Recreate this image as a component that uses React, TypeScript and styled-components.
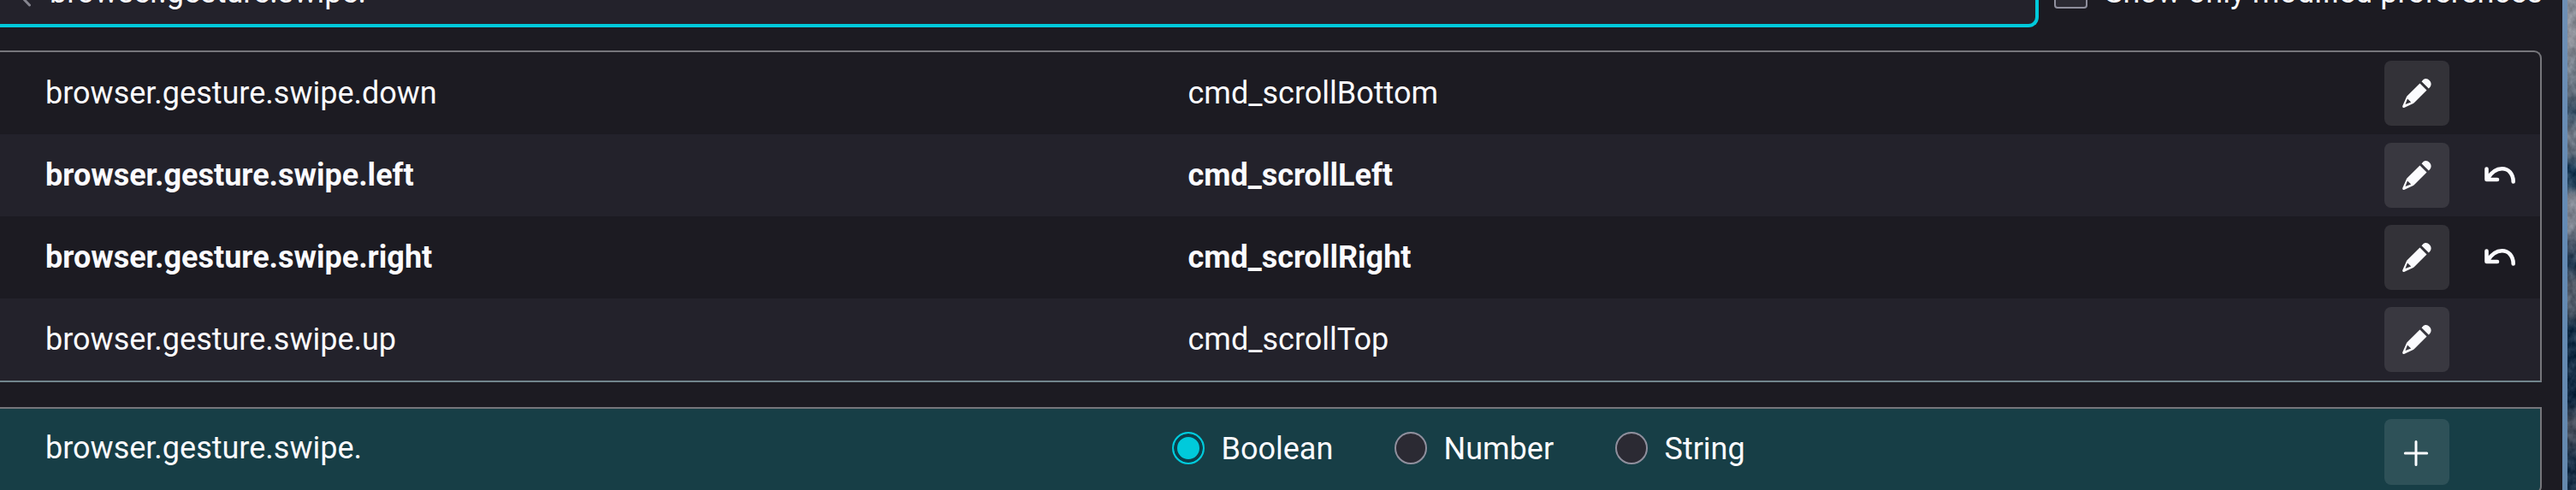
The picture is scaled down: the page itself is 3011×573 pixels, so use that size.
import React from "react";
import styled, { createGlobalStyle } from "styled-components";

const GlobalStyle = createGlobalStyle`
  * { box-sizing: border-box; }
  html, body { margin: 0; background: #1c1b22; overflow: hidden; }
  body { font-family: Roboto, sans-serif; font-size: 36px; line-height: 42px; color: #fbfbfe; }
`;

const Screen = styled.div`
  display: flex;
  width: 3011px;
  height: 573px;
  overflow: hidden;
`;

const Page = styled.main`
  width: 2995px;
  height: 573px;
  overflow: hidden;
  background: #1c1b22;
`;

const WindowEdge = styled.div`
  width: 6px;
  background: linear-gradient(#6d8fb5, #638ab4 50%, #6589ae);
`;

const Desktop = styled.svg`
  display: block;
  width: 10px;
  height: 573px;
`;

const SearchBar = styled.header`
  display: flex;
  align-items: flex-end;
  height: 32px;
`;

const SearchField = styled.div`
  display: flex;
  align-items: flex-end;
  width: 2383px;
  height: 32px;
  padding: 0 0 14px 11px;
  background: #23222b;
  border: solid #00cadb;
  border-width: 0 4px 4px 0;
  border-bottom-right-radius: 12px;
`;

const SearchIcon = styled.svg`
  flex: none;
  width: 26px;
  height: 26px;
  margin: 0 21px 6px 0;
`;

const SearchText = styled.span`
  height: 42px;
  margin-bottom: 2px;
`;

const Filter = styled.label`
  display: flex;
  align-items: flex-end;
  margin-left: 18px;
`;

const Checkbox = styled.span`
  width: 39px;
  height: 39px;
  margin: 0 20px 22px 0;
  background: #2b2a33;
  border: 2px solid #8f8f9d;
  border-radius: 4px;
`;

const FilterText = styled.span`
  white-space: nowrap;
  margin-bottom: 20px;
`;

const Prefs = styled.section`
  width: 2971px;
  height: 388px;
  margin-top: 27px;
  border: solid #76767b;
  border-width: 2px 2px 2px 0;
  border-bottom-color: #71858d;
  border-top-right-radius: 9px;
  overflow: hidden;
`;

const Row = styled.div<{ $modified?: boolean }>`
  display: flex;
  align-items: center;
  height: 96px;
  padding-left: 53px;
  font-weight: ${(p) => (p.$modified ? 700 : 400)};
  &:nth-child(even) { background: #23222b; }
`;

const Name = styled.span`
  width: 1335.5px;
`;

const Value = styled.span`
  width: 1398.5px;
`;

const IconButton = styled.button<{ $ghost?: boolean; $tall?: boolean }>`
  display: flex;
  align-items: center;
  justify-content: center;
  width: 76px;
  height: ${(p) => (p.$tall ? 77 : 76)}px;
  margin: 0 ${(p) => (p.$ghost ? 0 : 21)}px 0 0;
  padding: ${(p) => (p.$tall ? "3px 2px 0 0" : "0")};
  border: 0;
  border-radius: 8px;
  color: #fbfbfe;
  background: ${(p) => (p.$ghost ? "transparent" : "rgba(251, 251, 254, 0.1)")};
`;

const AddRow = styled.section`
  display: flex;
  align-items: flex-start;
  width: 2971px;
  height: 101px;
  margin-top: 29px;
  padding: 12px 0 0 53px;
  background: #173e46;
  border: solid #76767b;
  border-width: 2px 2px 2px 0;
  border-bottom-right-radius: 8px;
`;

const NewName = styled.span`
  width: 1317px;
  padding-top: 13px;
`;

const Types = styled.div`
  display: flex;
  width: 1417px;
  padding-top: 14px;
`;

const TypeOption = styled.label<{ $width: number }>`
  display: flex;
  width: ${(p) => p.$width}px;
`;

const Radio = styled.span<{ $checked?: boolean }>`
  width: 38px;
  height: 38px;
  margin: 1px 19.5px 0 0;
  border: 2px solid ${(p) => (p.$checked ? "#00cadb" : "#8f8f9d")};
  border-radius: 50%;
  background: ${(p) => (p.$checked ? "#00cadb" : "#2b2a33")};
  box-shadow: ${(p) => (p.$checked ? "inset 0 0 0 4px #0c3f4b" : "none")};
`;

const Pencil = () => (
  <svg width="34" height="34" viewBox="0 0 34 34" fill="currentColor">
    <path d="M22.500 3.200 24 1.700C26.500-0.700 29.500-0.200 31.700 2.100C34 4.500 34.300 7.500 32.300 10L30.800 11.500Z" />
    <path fillRule="evenodd" d="M20.500 5.500 28.500 13.500 14 28Q13.200 28.800 12.200 29.200L2 34Q0 34.300 0.200 32L4.700 21.800Q5.100 20.800 5.800 20.100ZM6 23.500 3.500 30 10.200 27.500Z" />
  </svg>
);

const Undo = () => (
  <svg width="36" height="20" viewBox="0 0 36 20" fill="none" stroke="currentColor" strokeWidth="4.600" strokeLinecap="round" strokeLinejoin="round">
    <path d="M2.500 2.500V15H15M3.500 14C9 5 15 2.300 20.500 2.300C28 2.300 33.700 8 33.700 17.500" />
  </svg>
);

const Plus = () => (
  <svg width="30" height="30" viewBox="0 0 30 30" fill="none" stroke="currentColor" strokeWidth="3" strokeLinecap="round">
    <path d="M15 1.500V28.500M2.300 15H27.700" />
  </svg>
);

const prefs = [
  { name: "browser.gesture.swipe.down", value: "cmd_scrollBottom", modified: false },
  { name: "browser.gesture.swipe.left", value: "cmd_scrollLeft", modified: true },
  { name: "browser.gesture.swipe.right", value: "cmd_scrollRight", modified: true },
  { name: "browser.gesture.swipe.up", value: "cmd_scrollTop", modified: false },
];

const types = [
  { label: "Boolean", width: 260 },
  { label: "Number", width: 258 },
  { label: "String", width: 200 },
];

export default function App() {
  return (
    <>
      <GlobalStyle />
      <Screen>
        <Page>
          <SearchBar>
            <SearchField>
              <SearchIcon viewBox="0 0 26 26" fill="none" stroke="#85858f" strokeWidth="3" strokeLinecap="round">
                <path d="M12 12 23.500 24" />
              </SearchIcon>
              <SearchText>browser.gesture.swipe.</SearchText>
            </SearchField>
            <Filter>
              <Checkbox />
              <FilterText>Show only modified preferences</FilterText>
            </Filter>
          </SearchBar>
          <Prefs>
            {prefs.map((p) => (
              <Row key={p.name} $modified={p.modified}>
                <Name>{p.name}</Name>
                <Value>{p.value}</Value>
                <IconButton aria-label="Edit"><Pencil /></IconButton>
                {p.modified && <IconButton $ghost aria-label="Reset"><Undo /></IconButton>}
              </Row>
            ))}
          </Prefs>
          <AddRow>
            <NewName>browser.gesture.swipe.</NewName>
            <Types>
              {types.map((t, i) => (
                <TypeOption key={t.label} $width={t.width}>
                  <Radio $checked={i === 0} />
                  {t.label}
                </TypeOption>
              ))}
            </Types>
            <IconButton $tall aria-label="Add"><Plus /></IconButton>
          </AddRow>
        </Page>
        <WindowEdge />
        <Desktop viewBox="0 0 10 573" preserveAspectRatio="none">
          <defs>
            <linearGradient id="earth" x1="0" y1="0" x2="0" y2="1">
              <stop offset="0" stopColor="#8d939d" />
              <stop offset="0.080" stopColor="#98989f" />
              <stop offset="0.140" stopColor="#7b8590" />
              <stop offset="0.190" stopColor="#65717e" />
              <stop offset="0.230" stopColor="#2d4a62" />
              <stop offset="0.270" stopColor="#7c8592" />
              <stop offset="0.310" stopColor="#65717f" />
              <stop offset="0.345" stopColor="#052c4b" />
              <stop offset="0.380" stopColor="#153853" />
              <stop offset="0.400" stopColor="#8b8f9a" />
              <stop offset="0.460" stopColor="#868c97" />
              <stop offset="0.500" stopColor="#404f63" />
              <stop offset="0.540" stopColor="#122f4a" />
              <stop offset="0.580" stopColor="#5c6470" />
              <stop offset="0.640" stopColor="#3e4c5b" />
              <stop offset="0.670" stopColor="#02213c" />
              <stop offset="0.820" stopColor="#021d37" />
              <stop offset="0.860" stopColor="#4b535f" />
              <stop offset="0.900" stopColor="#333f4e" />
              <stop offset="0.940" stopColor="#0a2640" />
              <stop offset="1" stopColor="#0b2742" />
            </linearGradient>
            <filter id="clouds" x="0" y="0" width="100%" height="100%" colorInterpolationFilters="sRGB">
              <feTurbulence type="fractalNoise" baseFrequency="0.12 0.09" numOctaves="4" seed="7" />
              <feColorMatrix values="1.500 0 0 0 -0.400  1.500 0 0 0 -0.380  1.500 0 0 0 -0.320  0 0 0 0 0.200" />
            </filter>
          </defs>
          <rect width="10" height="573" fill="url(#earth)" />
          <rect width="10" height="573" filter="url(#clouds)" />
        </Desktop>
      </Screen>
    </>
  );
}
